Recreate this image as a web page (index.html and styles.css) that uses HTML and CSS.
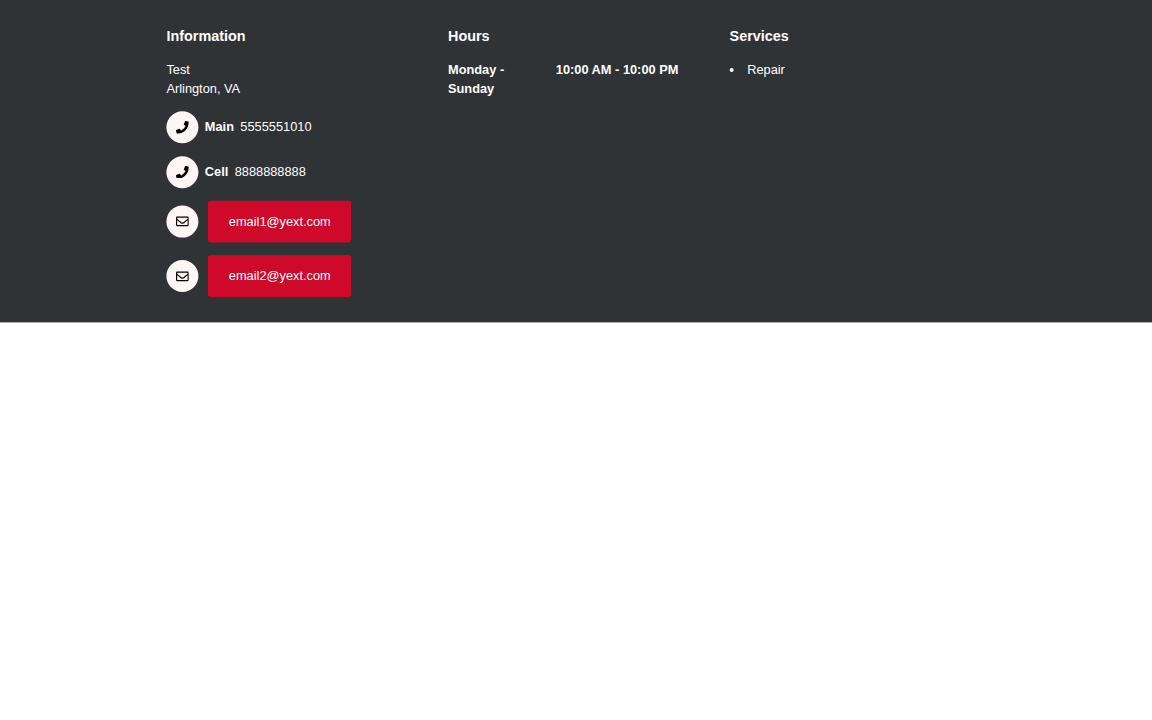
FILE: index.html
```html
<!DOCTYPE html>
<html lang="en">
<head>
<meta charset="utf-8">
<title>Location information</title>
<link rel="stylesheet" href="styles.css">
</head>
<body>
<svg class="sprite" aria-hidden="true">
  <symbol id="phone" viewBox="0 0 512 512"><path d="M493.4 24.6l-104-24c-11.3-2.6-22.9 3.3-27.5 13.9l-48 112c-4.2 9.8-1.4 21.3 6.9 28l60.6 49.6c-36 76.7-98.9 140.5-177.2 177.2l-49.6-60.6c-6.8-8.3-18.2-11.1-28-6.9l-112 48C3.9 366.5-2 378.1.6 389.4l24 104C27.1 504.2 36.7 512 48 512c256.1 0 464-207.5 464-464 0-11.2-7.7-20.9-18.6-23.4z"/></symbol>
  <symbol id="envelope" viewBox="0 0 512 512"><path d="M464 64H48C21.49 64 0 85.49 0 112v288c0 26.51 21.49 48 48 48h416c26.51 0 48-21.49 48-48V112c0-26.51-21.49-48-48-48zm0 48v40.805c-22.422 18.259-58.168 46.651-134.587 106.49-16.841 13.247-50.201 45.072-73.413 44.701-23.208.375-56.579-31.459-73.413-44.701C106.18 199.465 70.425 171.067 48 152.805V112h416zM48 400V214.398c22.914 18.251 55.409 43.862 104.938 82.646 21.857 17.205 60.134 55.186 103.062 54.955 42.717.231 80.509-37.199 103.053-54.947 49.528-38.783 82.032-64.401 104.947-82.653V400H48z"/></symbol>
</svg>
<section class="core">
  <div class="container">
    <div class="column">
      <h2 class="title">Information</h2>
      <address class="address">Test<br>Arlington, VA</address>
      <div class="contact phone"><span class="icon"><svg><use href="#phone"/></svg></span><strong>Main</strong><span class="number">5555551010</span></div>
      <div class="contact phone"><span class="icon"><svg><use href="#phone"/></svg></span><strong>Cell</strong><span class="number">8888888888</span></div>
      <div class="contact email first"><span class="icon"><svg><use href="#envelope"/></svg></span><a class="button">email1@yext.com</a></div>
      <div class="contact email"><span class="icon"><svg><use href="#envelope"/></svg></span><a class="button">email2@yext.com</a></div>
    </div>
    <div class="column">
      <h2 class="title">Hours</h2>
      <div class="hours"><span class="day">Monday - Sunday</span><span>10:00 AM - 10:00 PM</span></div>
    </div>
    <div class="column">
      <h2 class="title">Services</h2>
      <ul class="services"><li>Repair</li></ul>
    </div>
  </div>
</section>
</body>
</html>
```
FILE: styles.css
```css
html { font-size: 12.8px; }
body { margin: 0; background: #fff; font-family: "Liberation Sans", Arial, sans-serif; line-height: 1.5; }
.sprite { display: none; }
.core { background: #303336; color: #fff; padding: 2rem 0 25px; border-bottom: 1px solid #acadae; }
.container { width: 64rem; margin: 0 auto; display: grid; grid-template-columns: repeat(3, 1fr); gap: 2rem; }
.title { margin: 0 0 1rem; font-size: 14.4px; line-height: 1.5; font-weight: 700; }
.address { font-style: normal; }
.contact { display: flex; align-items: center; gap: .5rem; margin-top: 1rem; }
.phone strong, .phone .number { padding-bottom: .5px; }
.email { gap: .75rem; }
.icon { display: flex; align-items: center; justify-content: center; width: 2.5rem; height: 2.5rem; border-radius: 50%; background: #fff5f5; color: #000; transform: translate(.4px, .2px); }
.email .icon { transform: translate(.4px, 0); }
.first .icon { transform: translate(.4px, -.4px); }
.icon svg { width: 1rem; height: 1rem; fill: currentColor; transform: translate(-.4px, -.2px); }
.email svg { transform: translate(-.4px, 0); }
.first svg { transform: translate(-.4px, .4px); }
.button { padding: 11.2px 20.8px; border-radius: 3px; background: #ce092a; color: #fff; }
.first .button { box-shadow: 0 .4px 0 #ce092a, 0 -.2px 0 #ce092a; }
.hours { display: flex; font-weight: 700; }
.day { width: 75px; margin-right: 32.8px; }
.services { margin: 0; padding: 0; list-style: none; }
.services li { display: flex; }
.services li::before { content: ""; width: 4px; height: 4px; margin: 8px 13.6px 0 0; border-radius: 50%; background: #fff; transform: translateX(-.4px); }
```
